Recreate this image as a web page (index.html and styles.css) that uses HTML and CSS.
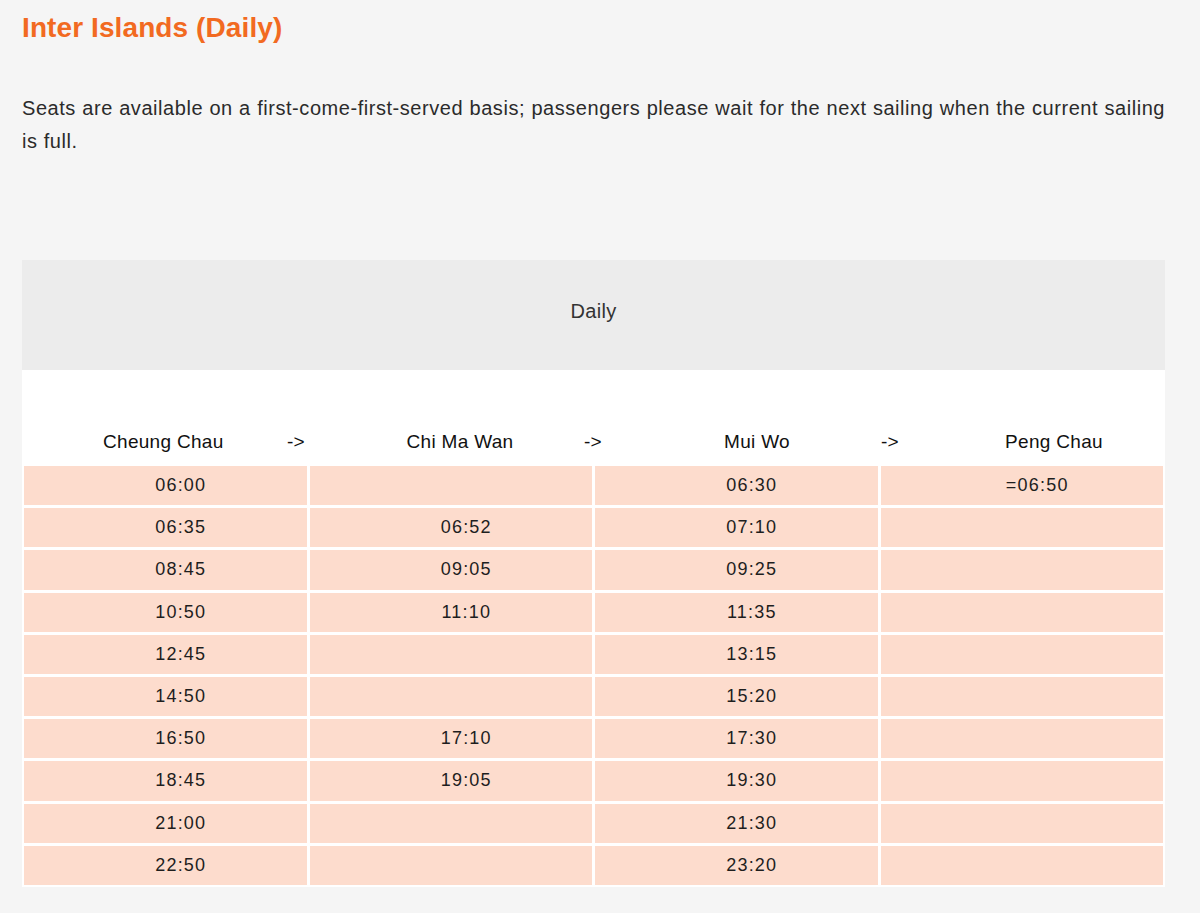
FILE: index.html
```html
<!DOCTYPE html>
<html lang="en">
<head>
<meta charset="utf-8">
<title>Inter Islands (Daily)</title>
<link rel="stylesheet" href="styles.css">
</head>
<body>
<main class="page">
  <h2 class="title">Inter Islands (Daily)</h2>
  <p class="note">Seats are available on a first-come-first-served basis; passengers please wait for the next sailing when the current sailing is full.</p>

  <section class="timetable">
    <div class="band">Daily</div>
    <div class="route">
      <span class="stop">Cheung Chau</span>
      <span class="arrow">-&gt;</span>
      <span class="stop">Chi Ma Wan</span>
      <span class="arrow">-&gt;</span>
      <span class="stop">Mui Wo</span>
      <span class="arrow">-&gt;</span>
      <span class="stop">Peng Chau</span>
    </div>
    <div class="grid">
      <div class="cell">06:00</div><div class="cell"></div><div class="cell">06:30</div><div class="cell">=06:50</div>
      <div class="cell">06:35</div><div class="cell">06:52</div><div class="cell">07:10</div><div class="cell"></div>
      <div class="cell">08:45</div><div class="cell">09:05</div><div class="cell">09:25</div><div class="cell"></div>
      <div class="cell">10:50</div><div class="cell">11:10</div><div class="cell">11:35</div><div class="cell"></div>
      <div class="cell">12:45</div><div class="cell"></div><div class="cell">13:15</div><div class="cell"></div>
      <div class="cell">14:50</div><div class="cell"></div><div class="cell">15:20</div><div class="cell"></div>
      <div class="cell">16:50</div><div class="cell">17:10</div><div class="cell">17:30</div><div class="cell"></div>
      <div class="cell">18:45</div><div class="cell">19:05</div><div class="cell">19:30</div><div class="cell"></div>
      <div class="cell">21:00</div><div class="cell"></div><div class="cell">21:30</div><div class="cell"></div>
      <div class="cell">22:50</div><div class="cell"></div><div class="cell">23:20</div><div class="cell"></div>
    </div>
  </section>
</main>
</body>
</html>
```

FILE: styles.css
```css
html, body {
  margin: 0;
  padding: 0;
  background: #f5f5f5;
}

body {
  font-family: "Liberation Sans", Arial, sans-serif;
  color: #333;
}

.page {
  width: 1143px;
  padding: 12px 0 0 22px;
}

.title {
  margin: 0;
  font-size: 28px;
  line-height: 32px;
  font-weight: 700;
  letter-spacing: 0.1px;
  color: #f26a21;
}

.note {
  margin: 48px 0 0;
  font-size: 20px;
  line-height: 33px;
  letter-spacing: 0.55px;
  text-align: justify;
  color: #2b2b2b;
}

.timetable {
  margin-top: 102px;
  background: #ffffff;
}

.band {
  height: 110px;
  box-sizing: border-box;
  padding-bottom: 8px;
  background: #ececec;
  display: flex;
  align-items: center;
  justify-content: center;
  font-size: 20px;
  letter-spacing: 0.3px;
  color: #333;
}

.route {
  height: 94px;
  display: flex;
  align-items: flex-end;
  padding-left: 81px;
  box-sizing: border-box;
  padding-bottom: 10px;
}

.stop, .arrow {
  width: 120px;
  text-align: center;
  font-size: 19px;
  line-height: 24px;
  letter-spacing: 0.3px;
  color: #111;
  white-space: nowrap;
}

.arrow {
  margin-left: 13px;
}

.arrow + .stop {
  margin-left: 44px;
}

.grid {
  display: grid;
  grid-template-columns: repeat(4, 1fr);
  gap: 3px;
  padding: 2px;
}

.cell {
  height: 39.2px;
  padding-left: 31px;
  background: #fddccd;
  display: flex;
  align-items: center;
  justify-content: center;
  font-size: 18px;
  letter-spacing: 1.2px;
  color: #1e1e1e;
}
```
